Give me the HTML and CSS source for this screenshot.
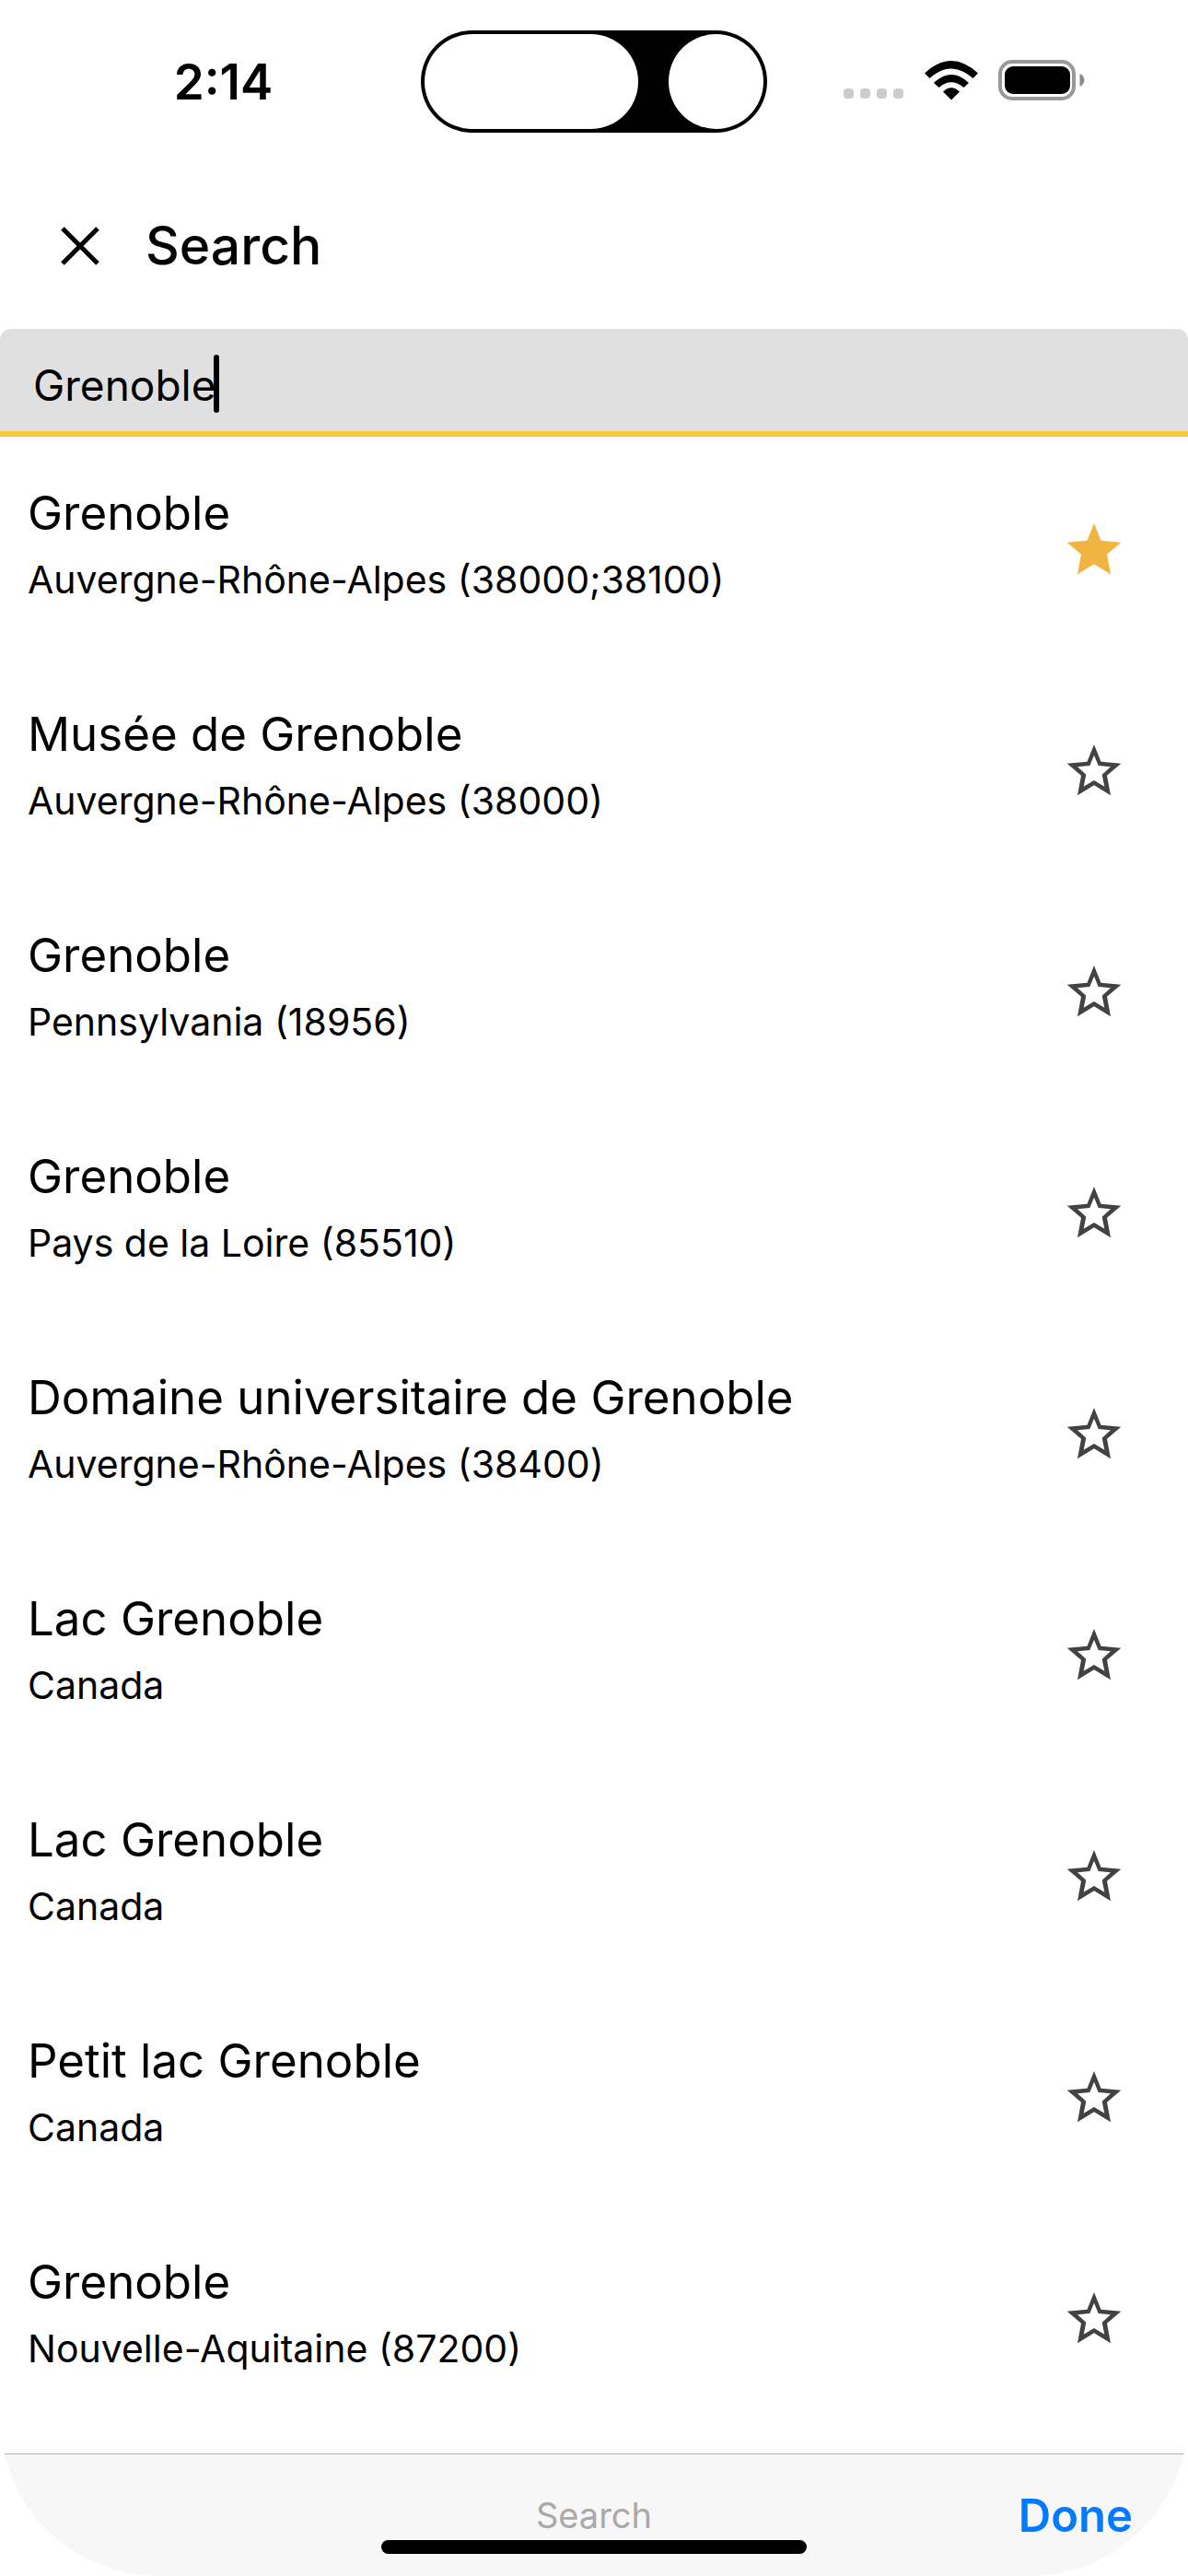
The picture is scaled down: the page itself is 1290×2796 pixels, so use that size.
FILE: index.html
```html
<!DOCTYPE html>
<html lang="en">
<head>
  <meta charset="utf-8">
  <meta name="viewport" content="width=device-width">
  <title>Search</title>
  <link rel="stylesheet" href="styles.css">
</head>
<body>
  <svg class="sprite" aria-hidden="true">
    <symbol id="star-full" viewBox="0 0 60 56">
      <path d="M30 0 37.500 18.700 59.300 20.700 44 33.700 48 55.300 30 44.300 12 55.300 16 33.700.700 20.700 22.500 18.700Z"/>
    </symbol>
    <symbol id="star-outline" viewBox="0 0 60 56">
      <path fill-rule="evenodd" d="M30 0 37.500 18.700 59.300 20.700 44 33.700 48 55.300 30 44.300 12 55.300 16 33.700.700 20.700 22.500 18.700ZM30 11.700 25.300 23 12 24.300 21.300 32.700 18.700 45.700 30 39 41.300 45.700 38.700 32.700 48 24.300 34.700 23Z"/>
    </symbol>
  </svg>
  <div class="screen">
    <div class="status">
      <time class="clock">2:14</time>
      <div class="island"><span class="island-pill"></span><span class="island-lens"></span></div>
      <div class="indicators">
        <div class="signal"><i></i><i></i><i></i><i></i></div>
        <svg class="wifi" viewBox="0 0 58 43" aria-hidden="true">
          <path d="M0 13.500Q29-13.500 58 13.500L52.500 19Q29-2 5.500 19Z"/>
          <path d="M10 24Q29 6 48 24L42.500 29Q29 17.500 15.500 29Z"/>
          <path d="M20 33.500Q29 25 38 33.500L29 42.500Z"/>
        </svg>
        <svg class="battery" viewBox="0 0 94 44" aria-hidden="true">
          <rect x="2" y="2" width="80" height="40" rx="13" fill="none" stroke="#999" stroke-width="4"/>
          <rect x="7" y="7" width="71" height="30" rx="9"/>
          <path d="M88.500 15C95 18 95 26 88.500 29Z" fill="#888"/>
        </svg>
      </div>
    </div>

    <header class="toolbar">
      <button class="close" aria-label="Close">
        <svg viewBox="0 0 42 42" aria-hidden="true"><path d="M2 2 40 40M40 2 2 40"/></svg>
      </button>
      <h1>Search</h1>
    </header>

    <div class="field">
      <input class="query" type="text" value="Grenoble" aria-label="Search">
      <span class="caret"></span>
    </div>

    <ul class="results">
      <li><div class="place"><h2>Grenoble</h2><p>Auvergne-Rhône-Alpes (38000;38100)</p></div><button class="star saved" aria-label="Remove favorite"><svg><use href="#star-full"/></svg></button></li>
      <li><div class="place"><h2>Musée de Grenoble</h2><p>Auvergne-Rhône-Alpes (38000)</p></div><button class="star" aria-label="Add favorite"><svg><use href="#star-outline"/></svg></button></li>
      <li><div class="place"><h2>Grenoble</h2><p>Pennsylvania (18956)</p></div><button class="star" aria-label="Add favorite"><svg><use href="#star-outline"/></svg></button></li>
      <li><div class="place"><h2>Grenoble</h2><p>Pays de la Loire (85510)</p></div><button class="star" aria-label="Add favorite"><svg><use href="#star-outline"/></svg></button></li>
      <li><div class="place"><h2>Domaine universitaire de Grenoble</h2><p>Auvergne-Rhône-Alpes (38400)</p></div><button class="star" aria-label="Add favorite"><svg><use href="#star-outline"/></svg></button></li>
      <li><div class="place"><h2>Lac Grenoble</h2><p>Canada</p></div><button class="star" aria-label="Add favorite"><svg><use href="#star-outline"/></svg></button></li>
      <li><div class="place"><h2>Lac Grenoble</h2><p>Canada</p></div><button class="star" aria-label="Add favorite"><svg><use href="#star-outline"/></svg></button></li>
      <li><div class="place"><h2>Petit lac Grenoble</h2><p>Canada</p></div><button class="star" aria-label="Add favorite"><svg><use href="#star-outline"/></svg></button></li>
      <li><div class="place"><h2>Grenoble</h2><p>Nouvelle-Aquitaine (87200)</p></div><button class="star" aria-label="Add favorite"><svg><use href="#star-outline"/></svg></button></li>
    </ul>

    <footer class="accessory">
      <span class="hint">Search</span>
      <button class="done">Done</button>
      <span class="home"></span>
    </footer>
  </div>
</body>
</html>
```
FILE: styles.css
```css
* {
  box-sizing: border-box;
  margin: 0;
  padding: 0;
}

body {
  background: #fff;
  color: #000;
  font-family: Inter, "Liberation Sans", sans-serif;
}

button {
  border: 0;
  background: none;
  font: inherit;
}

svg {
  display: block;
}

.sprite {
  position: absolute;
  width: 0;
  height: 0;
}

.screen {
  display: flex;
  flex-direction: column;
  min-height: 100vh;
  overflow: hidden;
  border-radius: 0 0 172px 172px;
}

/* Status bar */
.status {
  display: grid;
  grid-template-columns: 1fr auto 1fr;
  align-items: center;
  padding-top: 33px;
}

.clock {
  padding-left: 28px;
  font-size: 53px;
  font-weight: 600;
  line-height: 64px;
  text-align: center;
}

.island {
  display: flex;
  justify-content: space-between;
  width: 376px;
  height: 111px;
  padding: 4px;
  border-radius: 56px;
  background: #000;
}

.island-pill,
.island-lens {
  border-radius: 52px;
  background: #fff;
}

.island-pill {
  width: 232px;
}

.island-lens {
  width: 103px;
}

.indicators {
  display: flex;
  justify-content: flex-end;
  align-items: flex-end;
  padding: 0 112px 4px 0;
}

.signal {
  display: flex;
  gap: 7px;
  margin: 0 23px 2px 0;
}

.signal i {
  width: 11px;
  height: 11px;
  border-radius: 4px;
  background: #ccc;
}

.wifi {
  width: 58px;
  height: 43px;
  margin-right: 22px;
}

.battery {
  width: 94px;
  height: 44px;
}

/* Title bar */
.toolbar {
  display: flex;
  align-items: center;
  gap: 50px;
  height: 213px;
  padding: 42px 66px 10px;
}

.close svg {
  width: 42px;
  height: 42px;
  fill: none;
  stroke: #000;
  stroke-width: 5;
}

.toolbar h1 {
  font-size: 57px;
  font-weight: 500;
  line-height: 72px;
}

/* Search field */
.field {
  position: relative;
  border-bottom: 6px solid #f9c83d;
  border-radius: 12px 12px 0 0;
  background: #e0e0e0;
}

.query {
  display: block;
  width: 100%;
  height: 111px;
  padding: 10px 36px 0;
  border: 0;
  outline: 0;
  background: none;
  color: #000;
  font: 400 46px Inter, "Liberation Sans", sans-serif;
}

.caret {
  position: absolute;
  top: 28px;
  left: 232px;
  width: 6px;
  height: 63px;
  border-radius: 3px;
  background: #000;
}

/* Results */
.results {
  padding-top: 2px;
  list-style: none;
}

.results li {
  display: flex;
  align-items: center;
  justify-content: space-between;
  height: 240px;
  padding: 0 72px 0 30px;
}

.place {
  padding-bottom: 6px;
}

.place h2 {
  font-size: 51px;
  font-weight: 400;
  line-height: 72px;
}

.place p {
  font-size: 41px;
  line-height: 72px;
}

.star svg {
  width: 60px;
  height: 56px;
  fill: #424242;
}

.saved svg {
  fill: #efb441;
}

/* Keyboard accessory bar */
.accessory {
  position: relative;
  display: grid;
  grid-template-columns: 1fr auto 1fr;
  align-items: center;
  height: 133px;
  margin-top: auto;
  padding: 0 60px;
  border-top: 1px solid #b0b0b0;
  background: #f7f7f7;
}

.hint {
  grid-column: 2;
  color: #a9a9a9;
  font-size: 38px;
}

.done {
  justify-self: end;
  color: #007aff;
  font-size: 49px;
  font-weight: 600;
}

.home {
  position: absolute;
  bottom: 24px;
  left: 50%;
  width: 462px;
  height: 15px;
  border-radius: 8px;
  background: #000;
  transform: translateX(-50%);
}
```
